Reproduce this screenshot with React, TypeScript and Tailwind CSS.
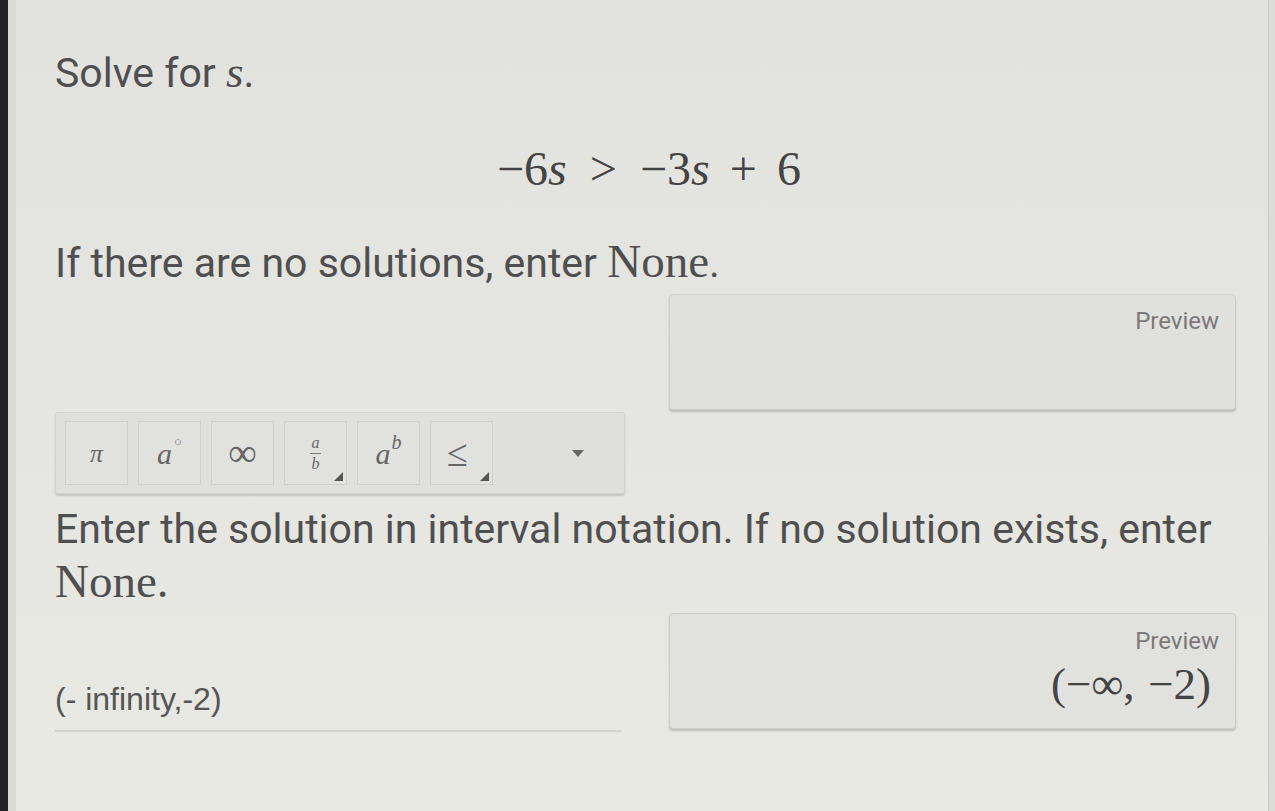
import React from "react";

const Corner = () => (
  <span className="absolute right-[3px] bottom-[3px] w-0 h-0 border-l-[9px] border-l-transparent border-b-[9px] border-b-[#555]" />
);

const Btn = ({ children, corner }: { children: React.ReactNode; corner?: boolean }) => (
  <div className="relative w-[63px] h-[64px] flex items-center justify-center border border-[#cfcfcc] bg-[#e1e1de] text-[#666]" style={{ fontFamily: '"Liberation Serif", serif' }}>
    {children}
    {corner && <Corner />}
  </div>
);

export default function App() {
  const sans = { fontFamily: 'Roboto, "Noto Sans", sans-serif' };
  const serif = { fontFamily: '"Liberation Serif", "DejaVu Serif", serif' };
  return (
    <div className="w-[1275px] h-[811px] flex overflow-hidden bg-gradient-to-b from-[#e2e2df] via-[#e5e5e1] to-[#e9e9e4]" style={sans}>
      <div className="w-[8px] h-full bg-[#232323]" />
      <div className="w-[8px] h-full bg-[#dadad6]" />
      <div className="flex-1 flex flex-col pl-[39px] pr-[31px] text-[#4f4f4f]">
        <div className="h-[46px]" />
        <div className="text-[41px] leading-[52px]">
          Solve for <span style={serif} className="italic text-[45px]">s</span>.
        </div>
        <div className="h-[50px] flex justify-center mt-[45px] text-[48px] leading-[50px] text-[#444]" style={serif}>
          <span className="pl-[6px]">
            −6<i>s</i>
            <span className="mx-[0.48em]">&gt;</span>
            −3<i>s</i>
            <span className="mx-[0.42em]">+</span>
            6
          </span>
        </div>
        <div className="mt-[41px] text-[41px] leading-[52px]">
          If there are no solutions, enter <span style={serif} className="text-[47px]">None</span>.
        </div>
        <div className="flex justify-end mt-[5px]">
          <div className="w-[567px] h-[116px] mr-[1px] rounded-[4px] border border-[#cdcdca] bg-[#e0e0dd] shadow-[0_2px_2px_rgba(0,0,0,0.18)] flex flex-col items-end pr-[16px] pt-[12px]">
            <span className="text-[24px] leading-[28px] text-[#7a7a7a]">Preview</span>
          </div>
        </div>
        <div className="w-[570px] h-[82px] mt-[2px] rounded-[3px] border border-[#d3d3cf] bg-[#dfdfdb] shadow-[0_2px_2px_rgba(0,0,0,0.15)] flex items-center pl-[9px] gap-[10px]">
          <Btn><span className="italic text-[26px]">π</span></Btn>
          <Btn>
            <span className="italic text-[30px]">a</span>
            <span className="text-[13px] -mt-[22px] ml-[2px]">○</span>
          </Btn>
          <Btn><span className="text-[40px] leading-none">∞</span></Btn>
          <Btn corner>
            <div className="flex flex-col items-center leading-none italic text-[16px]">
              <span>a</span>
              <span className="w-[11px] h-px bg-[#777] my-[2px]" />
              <span>b</span>
            </div>
          </Btn>
          <Btn>
            <span className="italic text-[30px]">a</span>
            <span className="italic text-[20px] -mt-[22px] ml-[1px]">b</span>
          </Btn>
          <Btn corner><span className="text-[38px] leading-none -ml-[8px]">≤</span></Btn>
          <div className="flex-1 flex justify-end pr-[40px]">
            <span className="w-0 h-0 border-l-[6px] border-r-[6px] border-t-[7px] border-l-transparent border-r-transparent border-t-[#666]" />
          </div>
        </div>
        <div className="mt-[9px] text-[41px] leading-[52px]">
          Enter the solution in interval notation. If no solution exists, enter
        </div>
        <div className="text-[47px] leading-[52px]" style={serif}>None.</div>
        <div className="flex justify-between mt-[6px]">
          <div className="w-[566px] flex flex-col justify-end">
            <div className="text-[32px] leading-[36px] text-[#555] pb-[13px]" style={{ fontFamily: '"Liberation Sans", Arial, sans-serif' }}>
              (- infinity,-2)
            </div>
            <div className="h-[2px] bg-[#d2d2ce] -mb-[3px]" />
          </div>
          <div className="w-[567px] h-[116px] mr-[1px] rounded-[4px] border border-[#cdcdca] bg-[#e1e1de] shadow-[0_2px_2px_rgba(0,0,0,0.18)] flex flex-col items-end pr-[16px] pt-[13px]">
            <span className="text-[24px] leading-[28px] text-[#7a7a7a]">Preview</span>
            <span className="text-[45px] leading-[50px] text-[#444] pr-[8px] mt-[4px]" style={serif}>
              (−∞,<span className="ml-[0.3em]">−2)</span>
            </span>
          </div>
        </div>
      </div>
      <div className="w-[1px] h-full bg-[#c9c9c6]" />
      <div className="w-[6px] h-full bg-[#dcdcd8]" />
    </div>
  );
}
